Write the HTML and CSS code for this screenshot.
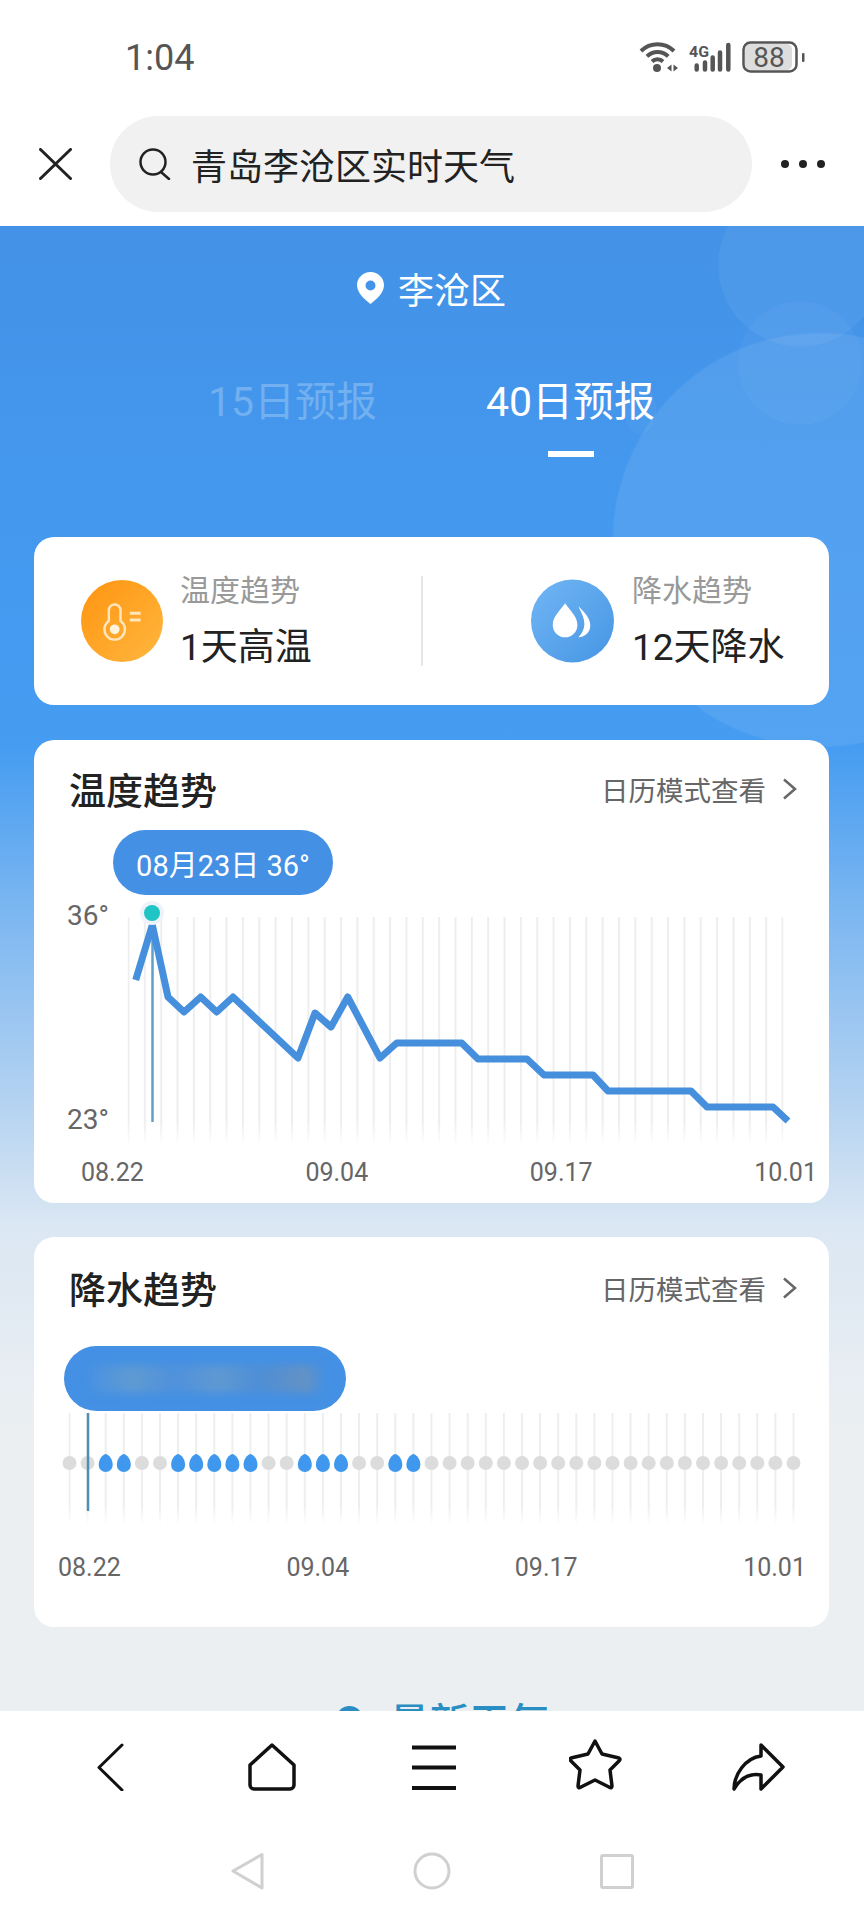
FILE: index.html
```html
<!DOCTYPE html>
<html lang="zh-CN">
<head>
    <meta charset="UTF-8">
    <meta name="viewport" content="width=device-width, initial-scale=1.0">
    <title>青岛李沧区实时天气</title>
    <link rel="stylesheet" href="styles.css">
</head>
<body>
    <div class="status-bar">
        <span class="clock">1:04</span>
        <svg class="status-icons" width="168" height="34" viewBox="0 0 168 34">
            <g fill="none" stroke="#555" stroke-width="4">
                <path d="M3 10A23.500 23.500 0 0 1 36 10"/>
                <path d="M9 15.400A15 15 0 0 1 30.200 15.400"/>
                <path d="M14 20.500A8 8 0 0 1 25 20.500"/>
            </g>
            <circle cx="19" cy="27" r="4" fill="#555"/>
            <path d="M33.500 23.500v7l-4.500-3.500zM35.500 23.500v7l4.500-3.500z" fill="#555"/>
            <text class="net-label" x="51" y="16" textLength="20" lengthAdjust="spacingAndGlyphs">4G</text>
            <g stroke="#555" stroke-width="4.500" stroke-linecap="round">
                <path d="M58.700 24.500V28.500M67 21.500V28.500M74.700 16.500V28.500M82 11.500V28.500M90.300 4V28.500"/>
            </g>
            <rect x="107" y="3" width="47" height="26" rx="5" fill="#ddd"/>
            <rect x="105.500" y="1.500" width="53" height="29" rx="7" fill="none" stroke="#555" stroke-width="2.500"/>
            <text class="battery-label" x="131" y="25.500">88</text>
            <rect x="164" y="12" width="2.500" height="9" rx="1" fill="#555"/>
        </svg>
    </div>

    <div class="search-row">
        <svg width="33" height="32" viewBox="0 0 33 32">
            <path d="M1.500 1.500L31.500 30.500M31.500 1.500L1.500 30.500" stroke="#222" stroke-width="3" stroke-linecap="round"/>
        </svg>
        <div class="search-pill">
            <svg width="32" height="32" viewBox="0 0 32 32" fill="none" stroke="#222" stroke-width="2.500">
                <circle cx="14" cy="14" r="12.500"/>
                <path d="M22 24L30 31" stroke-linecap="round"/>
            </svg>
            <span>青岛李沧区实时天气</span>
        </div>
        <div class="more-dots"><i></i><i></i><i></i></div>
    </div>

    <main class="weather">
        <div class="location">
            <svg width="27" height="32" viewBox="0 0 27 32">
                <path fill-rule="evenodd" fill="#fff" d="M13.500 0C6 0 0 6 0 13.200C0 21 8 27.500 13.500 32C19 27.500 27 21 27 13.200C27 6 21 0 13.500 0ZM13.500 8.500a5 5 0 1 1 0 10a5 5 0 1 1 0 -10Z"/>
            </svg>
            <span>李沧区</span>
        </div>

        <div class="tabs">
            <div class="tab">15日预报</div>
            <div class="tab tab-active">40日预报<div class="tab-line"></div></div>
        </div>

        <section class="card summary">
            <div class="summary-item">
                <svg width="82" height="84" viewBox="0 0 84 84">
                    <defs>
                        <linearGradient id="sun" x1="0" y1="0" x2="1" y2="1">
                            <stop offset="0" stop-color="#ff9410"/>
                            <stop offset="1" stop-color="#ffb73f"/>
                        </linearGradient>
                    </defs>
                    <circle cx="42" cy="42" r="42" fill="url(#sun)"/>
                    <path d="M28.500 42V31a6 6 0 0 1 12 0V42a10.500 10.500 0 1 1 -12 0Z" fill="none" stroke="#ffe6bd" stroke-width="2.500"/>
                    <circle cx="34.500" cy="50.500" r="5" fill="#fff3dc"/>
                    <path d="M50 34H61M50 41H61" stroke="#ffe6bd" stroke-width="3"/>
                </svg>
                <div>
                    <div class="summary-label">温度趋势</div>
                    <div class="summary-value">1天高温</div>
                </div>
            </div>
            <div class="summary-item summary-rain">
                <svg width="83" height="84" viewBox="0 0 84 84">
                    <defs>
                        <linearGradient id="sky" x1="0" y1="0" x2="1" y2="1">
                            <stop offset="0" stop-color="#72b6f4"/>
                            <stop offset="1" stop-color="#4595e4"/>
                        </linearGradient>
                    </defs>
                    <circle cx="42" cy="42" r="42" fill="url(#sky)"/>
                    <path d="M34.500 24C30 31 22 37 22 46A12.500 12.500 0 0 0 47 46C47 37 39 31 34.500 24Z" fill="#fff"/>
                    <path d="M48 27C54 33 60 39 60 46.500C60 53 55 58 48 58.500C52 54 54 50 54 45C54 38 50 32 48 27Z" fill="#fff"/>
                </svg>
                <div>
                    <div class="summary-label">降水趋势</div>
                    <div class="summary-value">12天降水</div>
                </div>
            </div>
        </section>

        <section class="card trend">
            <div class="card-head">
                <h2>温度趋势</h2>
                <div class="calendar-link">
                    <span>日历模式查看</span>
                    <svg width="15" height="22" viewBox="0 0 15 22"><path d="M2 1.500L13 11L2 20.500" fill="none" stroke="#666" stroke-width="2.500"/></svg>
                </div>
            </div>
            <div class="tip tip-temp">08月23日 36°</div>
            <svg class="chart" width="795" height="255" viewBox="34 895 795 255">
                <defs>
                    <pattern id="temp-grid" patternUnits="userSpaceOnUse" x="127.500" y="0" width="16.350" height="10">
                        <rect width="2" height="10" fill="#eeeeee"/>
                    </pattern>
                    <linearGradient id="temp-fade" x1="0" y1="0" x2="0" y2="1">
                        <stop offset="0" stop-color="#fff" stop-opacity="0"/>
                        <stop offset="1" stop-color="#fff"/>
                    </linearGradient>
                </defs>
                <rect x="127.500" y="917" width="656" height="228" fill="url(#temp-grid)"/>
                <rect x="120" y="1122" width="670" height="23" fill="url(#temp-fade)"/>
                <text class="y-label" x="67" y="925">36°</text>
                <text class="y-label" x="67" y="1129">23°</text>
                <path d="M152.500 925V1122" stroke="#5b9fcb" stroke-width="2.500"/>
                <polyline class="temp-line" points="135.700,980 152.300,925 168,997 184,1012 200.700,997 216.700,1012 233,997 298,1058 315,1013 331,1027 347.700,997 380,1058 396.700,1043 461.700,1043 478,1059 527,1059 544,1075 593,1075 608,1091 691,1091 707,1107 773,1107 788,1121"/>
                <circle cx="152" cy="913" r="12" fill="#eef3fb"/>
                <circle cx="152" cy="913" r="8" fill="#1fc4c4"/>
            </svg>
            <div class="axis axis-temp"><span>08.22</span><span>09.04</span><span>09.17</span><span>10.01</span></div>
        </section>

        <section class="card trend trend-rain">
            <div class="card-head">
                <h2>降水趋势</h2>
                <div class="calendar-link">
                    <span>日历模式查看</span>
                    <svg width="15" height="22" viewBox="0 0 15 22"><path d="M2 1.500L13 11L2 20.500" fill="none" stroke="#666" stroke-width="2.500"/></svg>
                </div>
            </div>
            <div class="tip tip-rain"><div class="tip-blur"></div></div>
            <svg class="chart" width="795" height="125" viewBox="34 1410 795 125">
                <defs>
                    <pattern id="rain-grid" patternUnits="userSpaceOnUse" x="68.500" y="0" width="18.100" height="10">
                        <rect width="2" height="10" fill="#eeeeee"/>
                    </pattern>
                    <linearGradient id="rain-fade" x1="0" y1="0" x2="0" y2="1">
                        <stop offset="0" stop-color="#fff" stop-opacity="0"/>
                        <stop offset="1" stop-color="#fff"/>
                    </linearGradient>
                    <path id="drop" d="M0-9C4-8 7-3 7 2A7 7 0 0 1-7 2C-7-3-4-8 0-9Z" fill="#3f98ee"/>
                    <circle id="dry" r="7" fill="#dcdcdc"/>
                </defs>
                <rect x="68.500" y="1412" width="727" height="112" fill="url(#rain-grid)"/>
                <rect x="60" y="1505" width="745" height="19" fill="url(#rain-fade)"/>
                <use href="#dry" x="69.500" y="1462"/>
                <use href="#dry" x="87.600" y="1462"/>
                <use href="#drop" x="105.700" y="1462"/>
                <use href="#drop" x="123.800" y="1462"/>
                <use href="#dry" x="141.900" y="1462"/>
                <use href="#dry" x="160" y="1462"/>
                <use href="#drop" x="178.100" y="1462"/>
                <use href="#drop" x="196.200" y="1462"/>
                <use href="#drop" x="214.300" y="1462"/>
                <use href="#drop" x="232.400" y="1462"/>
                <use href="#drop" x="250.500" y="1462"/>
                <use href="#dry" x="268.600" y="1462"/>
                <use href="#dry" x="286.700" y="1462"/>
                <use href="#drop" x="304.800" y="1462"/>
                <use href="#drop" x="322.900" y="1462"/>
                <use href="#drop" x="341" y="1462"/>
                <use href="#dry" x="359.100" y="1462"/>
                <use href="#dry" x="377.200" y="1462"/>
                <use href="#drop" x="395.300" y="1462"/>
                <use href="#drop" x="413.400" y="1462"/>
                <use href="#dry" x="431.500" y="1462"/>
                <use href="#dry" x="449.600" y="1462"/>
                <use href="#dry" x="467.700" y="1462"/>
                <use href="#dry" x="485.800" y="1462"/>
                <use href="#dry" x="503.900" y="1462"/>
                <use href="#dry" x="522" y="1462"/>
                <use href="#dry" x="540.100" y="1462"/>
                <use href="#dry" x="558.200" y="1462"/>
                <use href="#dry" x="576.300" y="1462"/>
                <use href="#dry" x="594.400" y="1462"/>
                <use href="#dry" x="612.500" y="1462"/>
                <use href="#dry" x="630.600" y="1462"/>
                <use href="#dry" x="648.700" y="1462"/>
                <use href="#dry" x="666.800" y="1462"/>
                <use href="#dry" x="684.900" y="1462"/>
                <use href="#dry" x="703" y="1462"/>
                <use href="#dry" x="721.100" y="1462"/>
                <use href="#dry" x="739.200" y="1462"/>
                <use href="#dry" x="757.300" y="1462"/>
                <use href="#dry" x="775.400" y="1462"/>
                <use href="#dry" x="793.500" y="1462"/>
                <path d="M88 1412V1510" stroke="#4f8fb5" stroke-width="2.500"/>
            </svg>
            <div class="axis axis-rain"><span>08.22</span><span>09.04</span><span>09.17</span><span>10.01</span></div>
        </section>

        <div class="next-section"><i></i><span>最新天气</span></div>
    </main>

    <div class="bottom-bars">
        <nav class="browser-nav">
            <svg width="54" height="52" viewBox="0 0 54 52"><path d="M39 6L16 28.500L39 51" fill="none" stroke="#111" stroke-width="3" stroke-linecap="round" stroke-linejoin="round"/></svg>
            <svg width="54" height="52" viewBox="0 0 54 52"><path d="M27 6L49 26V46a4 4 0 0 1 -4 4H9a4 4 0 0 1 -4 -4V26Z" fill="none" stroke="#111" stroke-width="3.500" stroke-linejoin="round"/></svg>
            <svg width="54" height="52" viewBox="0 0 54 52"><path d="M5 8.500H49M5 28.500H49M5 49H49" stroke="#111" stroke-width="4"/></svg>
            <svg width="54" height="52" viewBox="0 0 54 52"><path d="M26 2L33 15L50 19Q52 20 50 22L41 31L43 47Q43 50 40 48L26 41L12 48Q9 50 9 47L11 31L2 22Q0 20 2 19L19 15Z" fill="none" stroke="#111" stroke-width="3.500" stroke-linejoin="round"/></svg>
            <svg width="54" height="52" viewBox="0 0 54 52"><path d="M30 6L52 28L30 50V36C18 34 9 40 3 50C3 36 14 19 30 17Z" fill="none" stroke="#111" stroke-width="3.500" stroke-linejoin="round"/></svg>
        </nav>
        <div class="system-nav">
            <svg width="40" height="40" viewBox="0 0 40 40"><path d="M6 20L35 3.500V37Z" fill="none" stroke="#d0d0d0" stroke-width="3" stroke-linejoin="round"/></svg>
            <svg width="40" height="40" viewBox="0 0 40 40"><circle cx="20" cy="20" r="17" fill="none" stroke="#d0d0d0" stroke-width="3"/></svg>
            <svg width="40" height="40" viewBox="0 0 40 40"><rect x="4.500" y="4.500" width="31" height="32" rx="1.500" fill="none" stroke="#d0d0d0" stroke-width="3"/></svg>
        </div>
    </div>
</body>
</html>
```

FILE: styles.css
```css
* {
    box-sizing: border-box;
}

body {
    position: relative;
    margin: 0;
    height: 1920px;
    overflow: hidden;
    background-color: #fff;
    font-family: Roboto, "Noto Sans CJK SC", sans-serif;
    color: #222;
}

.status-bar {
    display: flex;
    justify-content: space-between;
    align-items: center;
    height: 116px;
    padding: 0 58px 0 125px;
}

.clock {
    font-size: 36px;
    color: #555;
}

.status-icons text {
    font-family: Roboto, sans-serif;
    fill: #555;
}

.net-label {
    font-size: 15px;
    font-weight: 700;
}

.battery-label {
    font-size: 28px;
    text-anchor: middle;
}

.search-row {
    display: flex;
    align-items: center;
    height: 110px;
    padding: 0 0 14px 39px;
}

.search-pill {
    display: flex;
    align-items: center;
    gap: 20px;
    width: 642px;
    height: 96px;
    margin-left: 38px;
    padding-left: 29px;
    border-radius: 48px;
    background-color: #f1f1f1;
    font-size: 36px;
}

.more-dots {
    display: flex;
    gap: 10px;
    margin-left: 29px;
}

.more-dots i {
    width: 8px;
    height: 8px;
    border-radius: 50%;
    background-color: #222;
}

.weather {
    height: 1694px;
    padding: 37px 35px 0 34px;
    background:
        radial-gradient(circle 208px at 820px 314px, rgba(255, 255, 255, 0.08) 99%, transparent 100%) no-repeat,
        radial-gradient(circle 82px at 800px 39px, rgba(255, 255, 255, 0.05) 99%, transparent 100%) no-repeat,
        radial-gradient(circle 62px at 800px 137px, rgba(255, 255, 255, 0.03) 99%, transparent 100%) no-repeat,
        radial-gradient(ellipse 16px 25px at 640px 183px, rgba(255, 255, 255, 0.03) 99%, transparent 100%) no-repeat,
        linear-gradient(to bottom, #4392e7 0, #4499ef 300px, #459cf1 520px, #7ab6f1 680px, #b5d3f1 880px, #dbe7f3 1000px, #ebeff2 1200px);
}

.location {
    display: flex;
    justify-content: center;
    align-items: center;
    gap: 14px;
    height: 50px;
    color: #fff;
    font-size: 36px;
}

.tabs {
    display: flex;
    justify-content: center;
    gap: 106px;
    margin-top: 57px;
    color: rgba(255, 255, 255, 0.25);
    font-size: 41px;
    line-height: 64px;
}

.tab {
    width: 172px;
    height: 87px;
    text-align: center;
}

.tab-active {
    color: #fff;
}

.tab-line {
    width: 46px;
    height: 6px;
    margin: 17px auto 0;
    background-color: #fff;
}

.card {
    background-color: #fff;
    border-radius: 20px;
}

.summary {
    display: flex;
    align-items: center;
    height: 168px;
    margin-top: 80px;
}

.summary-item {
    display: flex;
    align-items: center;
    gap: 17px;
    width: 387px;
    padding-left: 47px;
}

.summary-rain {
    width: 408px;
    height: 90px;
    gap: 18px;
    padding-left: 108px;
    border-left: 2px solid #e6e6e6;
}

.summary-label {
    color: #999;
    font-size: 30px;
    line-height: 40px;
}

.summary-value {
    margin-top: 14px;
    font-size: 37px;
    line-height: 46px;
}

.trend {
    margin-top: 35px;
    padding-top: 27px;
    padding-bottom: 15px;
}

.trend-rain {
    height: 390px;
    margin-top: 34px;
    padding-top: 29px;
}

.card-head {
    display: flex;
    justify-content: space-between;
    align-items: center;
    height: 44px;
    padding: 0 32px 0 35px;
}

.card-head h2 {
    margin: 0;
    font-size: 37px;
    font-weight: 500;
}

.calendar-link {
    display: flex;
    align-items: center;
    gap: 16px;
    color: #666;
    font-size: 27.500px;
}

.tip {
    display: flex;
    align-items: center;
    height: 65px;
    border-radius: 33px;
    background-color: #4390e4;
    color: #fff;
    font-size: 29px;
}

.tip-temp {
    width: 220px;
    margin: 19px 0 0 79px;
    justify-content: center;
}

.tip-rain {
    width: 282px;
    margin: 36px 0 0 30px;
    padding-left: 26px;
}

/* the text in this pill is smudged in the screenshot */
.tip-blur {
    width: 235px;
    height: 28px;
    filter: blur(4px);
    background: linear-gradient(90deg, #4a92e2, #5f9ad2 18%, #4f91dc 36%, #5f99d2 55%, #4e8ed6 72%, #6492c4 92%, #4390e4);
}

.chart {
    display: block;
}

.y-label {
    font-size: 28px;
    fill: #666;
}

.temp-line {
    fill: none;
    stroke: #458fdc;
    stroke-width: 7;
    stroke-linejoin: round;
}

.axis {
    display: flex;
    justify-content: space-between;
    color: #666;
    font-size: 25px;
    line-height: 30px;
}

.axis-temp {
    margin-top: 8px;
    padding: 0 12px 0 47px;
}

.axis-rain {
    margin-top: 17px;
    padding: 0 23px 0 24px;
}

.next-section {
    display: flex;
    justify-content: center;
    align-items: flex-start;
    gap: 27px;
    margin-top: 75px;
    padding-left: 22px;
    color: #2a8ec2;
    font-size: 40px;
    font-weight: 500;
    line-height: 44px;
}

.next-section i {
    width: 27px;
    height: 27px;
    margin-top: 4px;
    border-radius: 50%;
    background-color: #2a8ec2;
}

.bottom-bars {
    position: absolute;
    left: 0;
    right: 0;
    bottom: 0;
    height: 209px;
    padding-top: 28px;
    background-color: #fff;
}

.browser-nav {
    display: grid;
    grid-template-columns: repeat(5, 162px);
    justify-items: center;
    padding-left: 29px;
}

.browser-nav svg {
    display: block;
}

.system-nav {
    display: grid;
    grid-template-columns: repeat(3, 185px);
    justify-items: center;
    margin-top: 60px;
    padding-left: 154px;
}
```
